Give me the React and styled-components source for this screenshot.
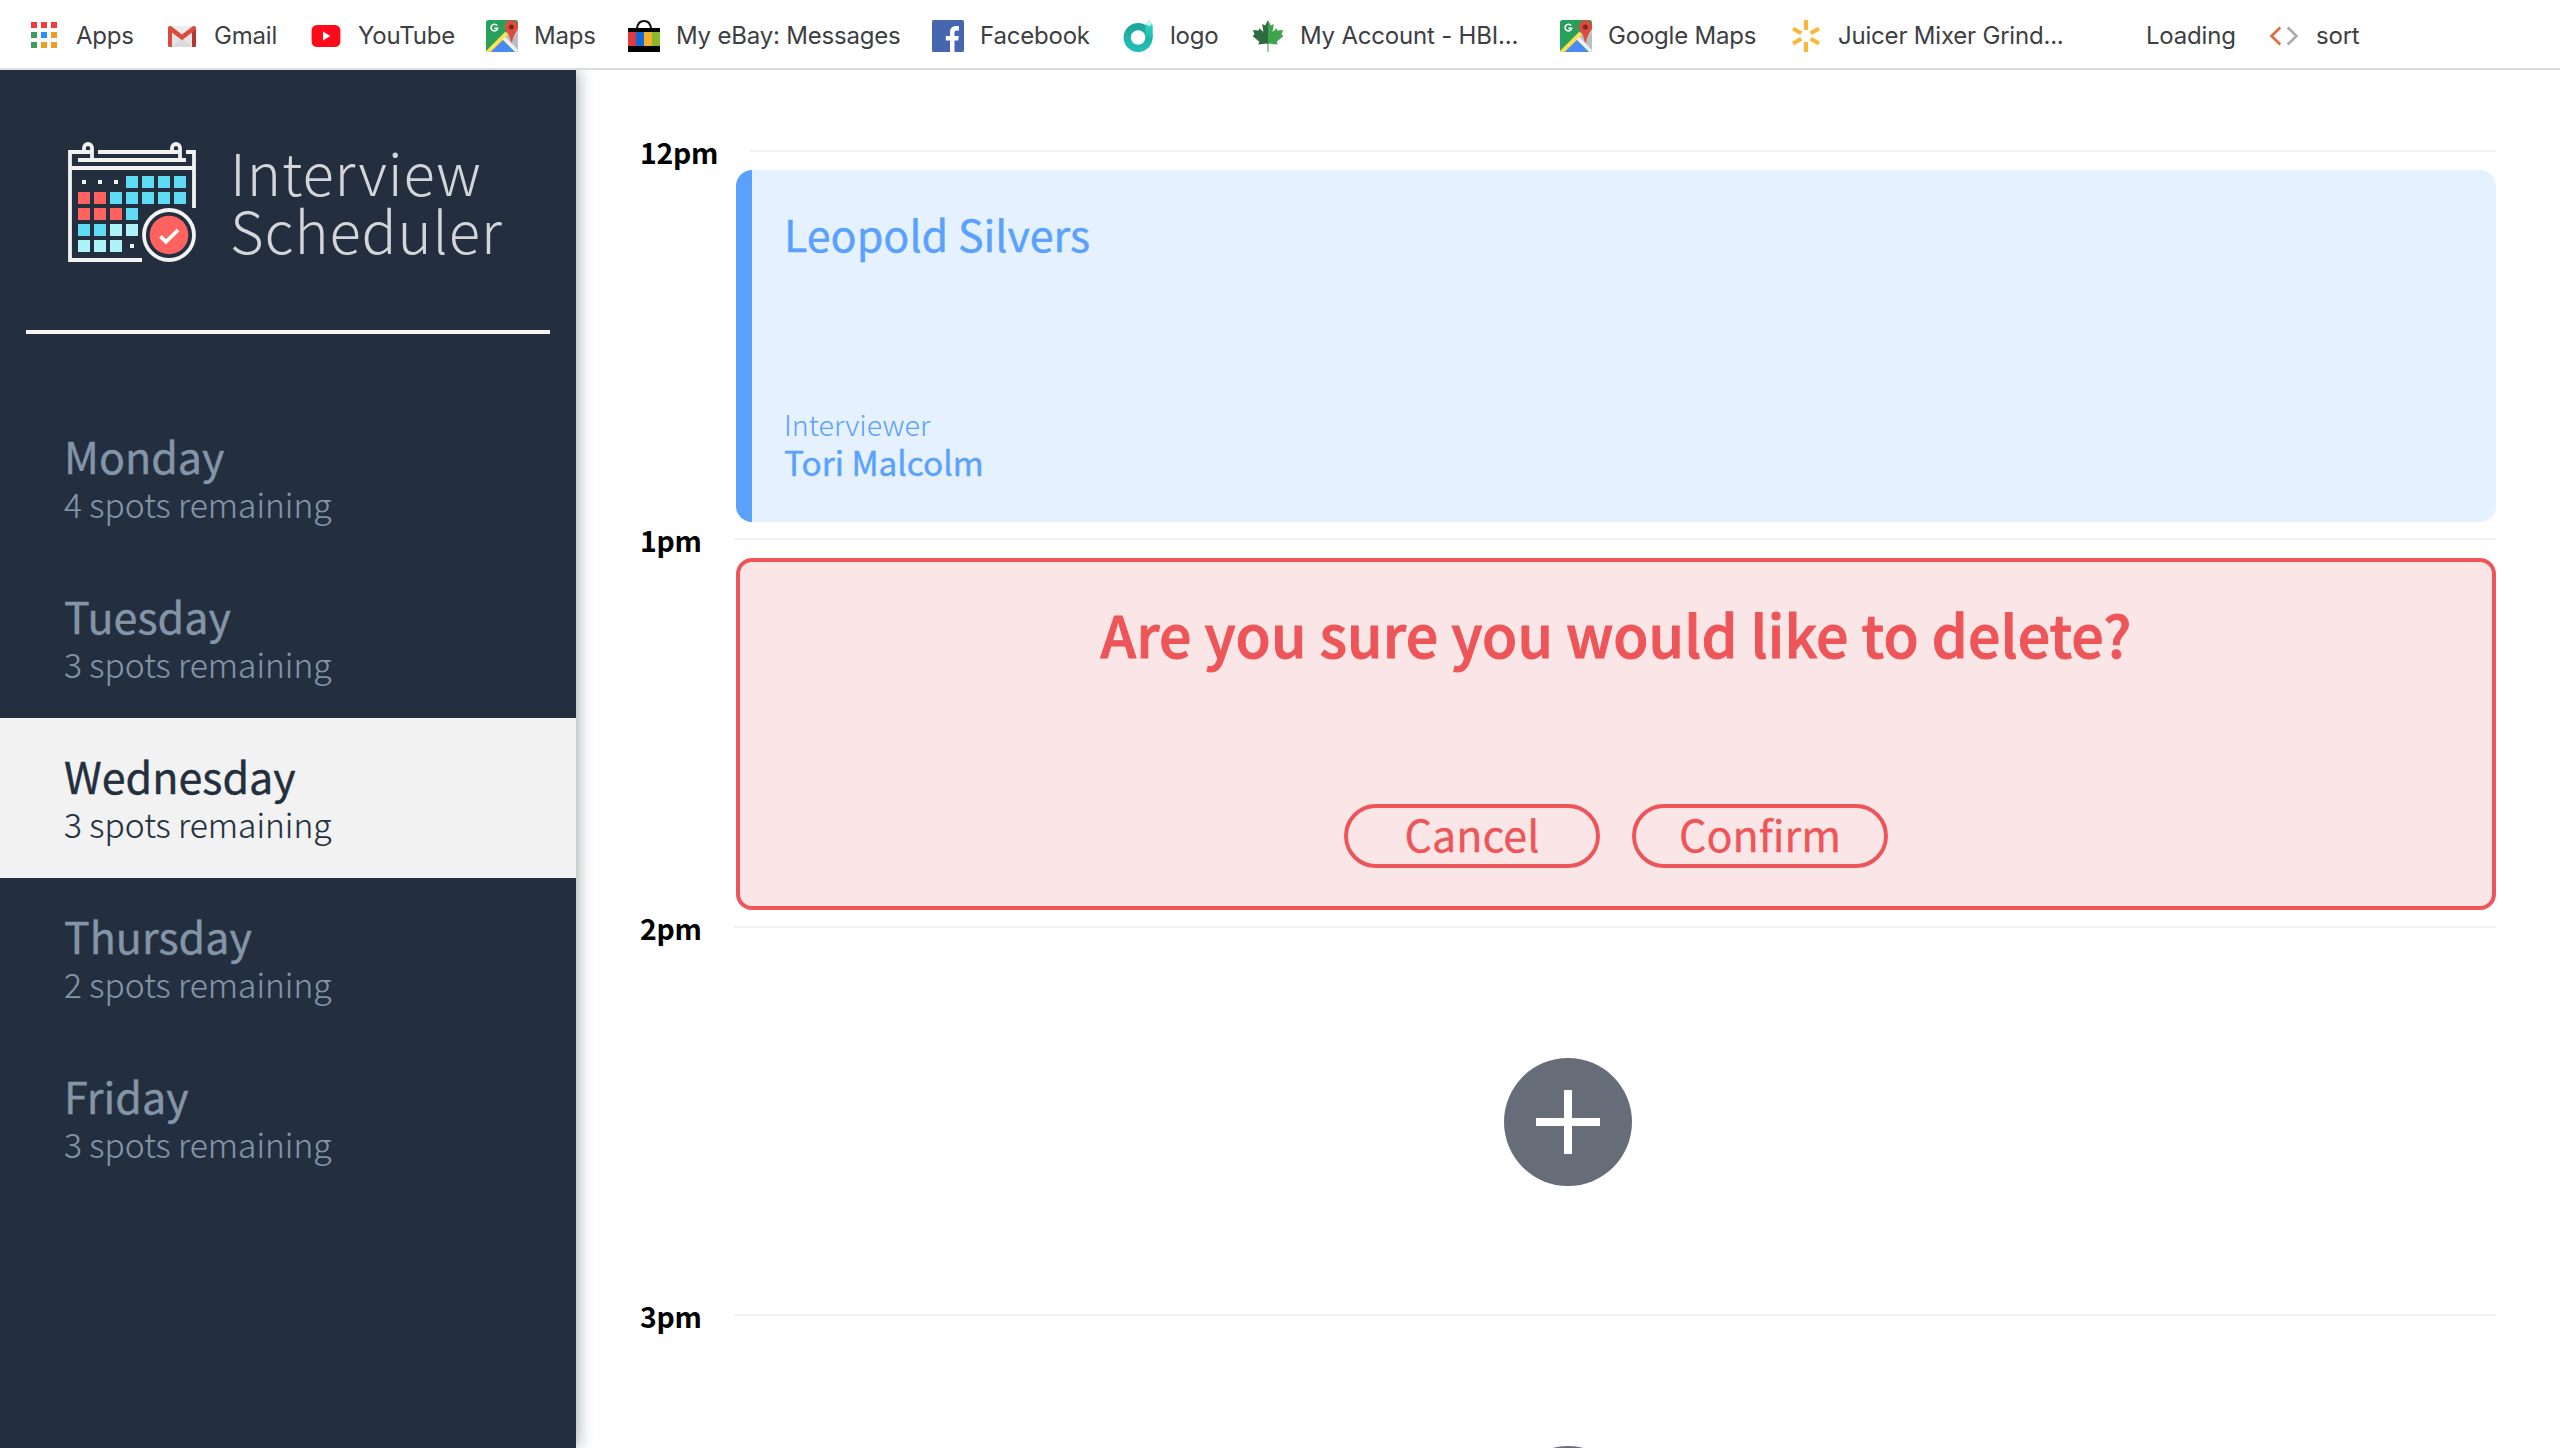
import React from 'react';
import styled, { createGlobalStyle } from 'styled-components';

const GlobalStyle = createGlobalStyle`
  *, *::before, *::after { box-sizing: border-box; }
  body {
    margin: 0;
    background: #ffffff;
    font-family: "Noto Sans CJK SC", "Open Sans", sans-serif;
    overflow: hidden;
  }
  h1, h2, h3, h4, p, ul { margin: 0; padding: 0; font-weight: 400; }
`;

const Page = styled.div`
  display: flex;
  flex-direction: column;
  width: 2560px;
  height: 1448px;
  overflow: hidden;
`;

/* ---------- bookmarks bar ---------- */

const BookmarksBar = styled.nav`
  display: flex;
  align-items: center;
  flex: none;
  height: 70px;
  padding: 4px 0 0 28px;
  background: #fff;
  border-bottom: 2px solid #dadce0;
`;

const Bookmark = styled.a`
  display: flex;
  align-items: center;
  gap: 16px;
  flex: none;
  width: ${(p) => p.$width}px;
  color: #3c4043;
  font: 400 24px/32px Inter, Roboto, sans-serif;
  letter-spacing: -0.2px;
  white-space: nowrap;
`;

const Favicon = styled.svg`
  display: block;
  flex: none;
  width: 32px;
  height: 32px;
`;

const AppsIcon = () => {
  const colors = ['#f33b3b', '#f33b3b', '#f33b3b', '#3f9c5a', '#2b8df7', '#eb9f25', '#3f9c5a', '#eb9f25', '#eb9f25'];
  return (
    <Favicon viewBox="0 0 32 32">
      {colors.map((c, i) => (
        <rect key={i} x={3 + (i % 3) * 10} y={2 + Math.floor(i / 3) * 10} width="6" height="6" fill={c} />
      ))}
    </Favicon>
  );
};

const GmailIcon = () => (
  <Favicon viewBox="0 0 32 32">
    <rect x="2" y="6" width="28" height="21" rx="1.500" fill="#ececec" />
    <path d="M6 27l10-9 10 9z" fill="#dcdcdc" />
    <path d="M5 27V12l11 9 11-9v15z" fill="#d6d6d6" opacity=".35" />
    <path d="M2 7.500v18A1.500 1.500 0 0 0 3.500 27H6V11.500z" fill="#d54b3f" />
    <path d="M30 7.500v18a1.500 1.500 0 0 1-1.500 1.500H26V11.500z" fill="#b6352c" />
    <path d="M2 8c0-2 2-2.600 3.200-1.700L16 14.500l10.800-8.200C28 5.400 30 6 30 8v1.500L16 20.300 2 9.500z" fill="#dc4b40" />
  </Favicon>
);

const YouTubeIcon = () => (
  <Favicon viewBox="0 0 32 32">
    <rect x="1.600" y="5" width="28.800" height="22" rx="5.500" fill="#ff0a1a" />
    <path d="M13 11.500v9l7.300-4.500z" fill="#fff" />
  </Favicon>
);

const MapsIcon = ({ id }) => (
  <Favicon viewBox="0 0 32 32">
    <clipPath id={id}>
      <rect width="32" height="32" rx="2.500" />
    </clipPath>
    <g clipPath={`url(#${id})`}>
      <rect width="32" height="32" fill="#28a05c" />
      <path d="M19 13L32 8v24z" fill="#c9cacd" />
      <path d="M32 14v18L19 17z" fill="#bdbec2" />
      <path d="M16.500 19.500L3 33h26z" fill="#4a8af4" />
      <path d="M19.500 11.500L-1 32h5.500L22 15z" fill="#ffdf4f" />
      <path d="M19 16.500l-2.500 3L29 32h5z" fill="#eff0f2" />
    </g>
    <path d="M25.500 0a6.800 6.800 0 0 0-6.800 6.800c0 4.700 5.300 7 6.100 15.500h1.300c.8-8.500 6-10.800 6-15.500A6.700 6.700 0 0 0 25.500 0z" fill="#dd4b3e" />
    <circle cx="25.300" cy="7" r="2.500" fill="#7d2620" />
    <path d="M11 5.600A3.300 3.300 0 1 0 11.600 8.300H8.300" fill="none" stroke="#fff" strokeWidth="1.600" />
  </Favicon>
);

const EbayIcon = () => (
  <Favicon viewBox="0 0 32 32">
    <path d="M9 8.500C9.500 4 12 1 16 1s6.500 3 7 7.500" fill="none" stroke="#111" strokeWidth="2" />
    <rect y="8" width="32" height="24" fill="#000" />
    <rect y="12" width="8" height="14" fill="#e43640" />
    <rect x="8" y="12" width="8" height="14" fill="#1268d6" />
    <rect x="16" y="12" width="8" height="14" fill="#f5ae2c" />
    <rect x="24" y="12" width="8" height="14" fill="#88b82c" />
  </Favicon>
);

const FacebookIcon = () => (
  <Favicon viewBox="0 0 32 32">
    <rect width="32" height="32" rx="1.600" fill="#4667b0" />
    <path d="M18 32V20.500h-4.200V16H18v-3.700C18 8.200 20.500 6 24.200 6c1.200 0 2.200.1 2.800.2v4.200h-2.200c-1.800 0-2.300.9-2.300 2.200V16h4.300l-.6 4.500h-3.700V32z" fill="#fff" />
  </Favicon>
);

const LogoIcon = () => (
  <Favicon viewBox="0 0 32 32">
    <defs>
      <linearGradient id="ring" x1="0" y1="0" x2="0" y2="1">
        <stop offset="0" stopColor="#1ba79b" />
        <stop offset="1" stopColor="#22bdb5" />
      </linearGradient>
      <linearGradient id="stem" x1="0" y1="0" x2="0" y2="1">
        <stop offset="0" stopColor="#37e0bd" />
        <stop offset="1" stopColor="#20b9b0" />
      </linearGradient>
    </defs>
    <circle cx="16.100" cy="17.500" r="10.900" fill="none" stroke="url(#ring)" strokeWidth="7.200" />
    <path d="M23.500 10.500V5.500L25 3.200 27 0l2.200 3.200 1.500 2.300v12.500h-7z" fill="url(#stem)" />
    <path d="M27 0l-2.200 4.200c.4 1.200 1.200 1.800 2.200 1.800s1.900-.6 2.300-1.800z" fill="#c9fbee" />
  </Favicon>
);

const LEAF_HALF =
  'M16 0l-2.800 5.500-3-1.500 1.200 8-4-3.800-.9 2.400L1 10l1.500 4.500L.5 16l6.800 5.800-1 2.700L15.200 23.500 15 32h1z';

const LeafIcon = () => (
  <Favicon viewBox="0 0 32 32">
    <path d={LEAF_HALF} fill="#2f6b40" />
    <path d={LEAF_HALF} transform="matrix(-1 0 0 1 32 0)" fill="#3fa54c" />
    <path d="M16 24v8" stroke="#9fcca5" strokeWidth="2" />
  </Favicon>
);

const SparkIcon = () => (
  <Favicon viewBox="0 0 32 32">
    <g stroke="#fcb737" strokeWidth="4.200" strokeLinecap="butt">
      {[0, 180].map((a) => (
        <path key={a} d="M16 0V10" transform={`rotate(${a} 16 16)`} />
      ))}
      {[60, 120, 240, 300].map((a) => (
        <path key={a} d="M16 1V10.500" transform={`rotate(${a} 16 16)`} />
      ))}
    </g>
  </Favicon>
);

const BlankIcon = () => <Favicon viewBox="0 0 32 32" />;

const CodeIcon = () => (
  <Favicon viewBox="0 0 32 32" fill="none" strokeWidth="2.600">
    <path d="M12.300 7.500L3.500 16l8.800 8.500" stroke="#e2673f" />
    <path d="M19.700 7.500l8.800 8.500-8.800 8.500" stroke="#adadad" />
  </Favicon>
);

const bookmarks = [
  { label: 'Apps', width: 138, icon: <AppsIcon /> },
  { label: 'Gmail', width: 144, icon: <GmailIcon /> },
  { label: 'YouTube', width: 176, icon: <YouTubeIcon /> },
  { label: 'Maps', width: 142, icon: <MapsIcon id="maps-a" /> },
  { label: 'My eBay: Messages', width: 304, icon: <EbayIcon /> },
  { label: 'Facebook', width: 190, icon: <FacebookIcon /> },
  { label: 'logo', width: 130, icon: <LogoIcon /> },
  { label: 'My Account - HBI...', width: 308, icon: <LeafIcon /> },
  { label: 'Google Maps', width: 230, icon: <MapsIcon id="maps-b" /> },
  { label: 'Juicer Mixer Grind...', width: 308, icon: <SparkIcon /> },
  { label: 'Loading', width: 170, icon: <BlankIcon /> },
  { label: 'sort', width: 120, icon: <CodeIcon /> },
];

/* ---------- sidebar ---------- */

const Body = styled.div`
  display: flex;
  flex: 1;
  min-height: 0;
`;

const Sidebar = styled.aside`
  flex: none;
  width: 576px;
  background: #232f3f;
  box-shadow: 0 0 16px rgba(34, 47, 62, 0.5);
  clip-path: inset(0 -40px 0 0);
`;

const Brand = styled.div`
  display: flex;
  gap: 32px;
  height: 260px;
  padding: 70px 0 0 66px;
`;

const BrandName = styled.h1`
  padding-top: 2px;
  color: #d3d5d8;
  font-size: 58px;
  font-weight: 300;
  line-height: 58px;
  letter-spacing: 0.9px;
`;

const BrandLine = styled.span`
  display: block;
`;

const CalendarSvg = styled.svg`
  flex: none;
  width: 132px;
  height: 124px;
`;

const CELLS = ['...cccc', 'rrccccc', 'rrrc', 'ccll', 'lll.'];
const CELL_COLORS = { c: '#5fdcf3', r: '#ff625f', l: '#aef2fa' };

const CalendarLogo = () => (
  <CalendarSvg viewBox="66 140 132 124">
    <g fill="none" stroke="#f2f2f2" strokeWidth="3.800">
      <path d="M142 260H70V152H92" />
      <path d="M84 152v-4a4 4 0 0 1 8 0v12" />
      <path d="M98 152H180" />
      <path d="M172 152v-4a4 4 0 0 1 8 0v12" />
      <path d="M186 152H194V208" />
      <path d="M78 160H186" />
      <path d="M70 168H194" />
    </g>
    {CELLS.map((row, r) =>
      row.split('').map((c, i) =>
        c === '.' ? (
          <rect key={`${r}${i}`} x={82 + i * 16} y={180 + r * 16} width="4" height="4" fill="#f2f2f2" />
        ) : (
          <rect key={`${r}${i}`} x={78 + i * 16} y={176 + r * 16} width="12" height="12" fill={CELL_COLORS[c]} />
        )
      )
    )}
    <circle cx="169" cy="235" r="25" fill="#232f3f" stroke="#f2f2f2" strokeWidth="3.800" />
    <circle cx="169" cy="235" r="19.300" fill="#ff625f" />
    <path d="M160.500 236.300l5.500 5.500L178 230" fill="none" stroke="#fff" strokeWidth="3.800" />
  </CalendarSvg>
);

const Divider = styled.hr`
  height: 4px;
  margin: 0 26px 64px;
  border: 0;
  background: #f8f4f2;
`;

const DayItem = styled.li`
  height: 160px;
  padding: 33px 0 0 64px;
  list-style: none;
  color: ${(p) => (p.$selected ? '#222f3e' : '#8395a7')};
  background: ${(p) => (p.$selected ? '#f2f2f2' : 'transparent')};
`;

const DayName = styled.h2`
  font-size: 43px;
  line-height: 48px;
  -webkit-text-stroke: 0.4px currentColor;
`;

const Spots = styled.h3`
  margin-top: 3px;
  font-size: 33.5px;
  font-weight: 300;
  line-height: 44px;
  -webkit-text-stroke: 0.2px currentColor;
`;

const days = [
  { name: 'Monday', spots: 4 },
  { name: 'Tuesday', spots: 3 },
  { name: 'Wednesday', spots: 3, selected: true },
  { name: 'Thursday', spots: 2 },
  { name: 'Friday', spots: 3 },
];

/* ---------- schedule ---------- */

const Schedule = styled.main`
  flex: 1;
  padding: 65px 64px 0;
  overflow: hidden;
`;

const Slot = styled.article`
  height: 388px;
`;

const SlotHeader = styled.header`
  display: flex;
  align-items: center;
  gap: 32px;
  height: 32px;
  margin-bottom: 3px;
`;

const Time = styled.h4`
  padding-top: 2px;
  color: #000;
  font-size: 28.4px;
  font-weight: 700;
  line-height: 32px;
  letter-spacing: -0.3px;
`;

const Rule = styled.div`
  flex: 1;
  height: 2px;
  background: #f2f2f2;
`;

const Appointment = styled.section`
  display: flex;
  flex-direction: column;
  justify-content: space-between;
  height: 352px;
  margin-left: 96px;
  padding: 38px 32px 40px;
  color: #59a1fd;
  background: #e5f1ff;
  border-left: 16px solid #59a1fb;
  border-radius: 16px;
`;

const Student = styled.h2`
  font-size: 43px;
  line-height: 50px;
  -webkit-text-stroke: 0.4px currentColor;
`;

const InterviewerLabel = styled.h4`
  font-size: 28.7px;
  font-weight: 300;
  line-height: 36px;
`;

const InterviewerName = styled.h3`
  font-size: 33.4px;
  line-height: 40px;
  -webkit-text-stroke: 0.4px currentColor;
`;

const ConfirmCard = styled.section`
  display: flex;
  flex-direction: column;
  align-items: center;
  justify-content: space-between;
  height: 352px;
  margin-left: 96px;
  padding: 40px 0 38px;
  color: #ed5558;
  background: #fbe6e7;
  border: 4px solid #ed5558;
  border-radius: 16px;
`;

const Question = styled.h1`
  font-size: 57.3px;
  font-weight: 500;
  line-height: 64px;
  letter-spacing: 0.1px;
  -webkit-text-stroke: 1px currentColor;
`;

const Actions = styled.div`
  display: flex;
  gap: 32px;
`;

const Button = styled.button`
  display: flex;
  align-items: center;
  justify-content: center;
  width: 256px;
  height: 64px;
  padding: 0 0 7px;
  color: inherit;
  background: transparent;
  border: 4px solid #ed5558;
  border-radius: 32px;
  font: 400 43px/48px "Noto Sans CJK SC", sans-serif;
  -webkit-text-stroke: 0.3px currentColor;
`;

const EmptySlot = styled.section`
  display: flex;
  align-items: center;
  justify-content: center;
  height: 352px;
`;

const AddSvg = styled.svg`
  display: block;
  width: 128px;
  height: 128px;
`;

const AddButton = () => (
  <EmptySlot>
    <AddSvg viewBox="0 0 128 128">
      <circle cx="64" cy="64" r="64" fill="#666d78" />
      <path d="M64 32V96M32 64H96" stroke="#fff" strokeWidth="8" />
    </AddSvg>
  </EmptySlot>
);

const TimeSlot = ({ time, children }) => (
  <Slot>
    <SlotHeader>
      <Time>{time}</Time>
      <Rule />
    </SlotHeader>
    {children}
  </Slot>
);

export default function App() {
  return (
    <Page>
      <GlobalStyle />
      <BookmarksBar>
        {bookmarks.map((b) => (
          <Bookmark key={b.label} $width={b.width}>
            {b.icon}
            <span>{b.label}</span>
          </Bookmark>
        ))}
      </BookmarksBar>
      <Body>
        <Sidebar>
          <Brand>
            <CalendarLogo />
            <BrandName>
              <BrandLine>Interview</BrandLine>
              <BrandLine>Scheduler</BrandLine>
            </BrandName>
          </Brand>
          <Divider />
          <ul>
            {days.map((d) => (
              <DayItem key={d.name} $selected={d.selected}>
                <DayName>{d.name}</DayName>
                <Spots>{d.spots} spots remaining</Spots>
              </DayItem>
            ))}
          </ul>
        </Sidebar>
        <Schedule>
          <TimeSlot time="12pm">
            <Appointment>
              <Student>Leopold Silvers</Student>
              <div>
                <InterviewerLabel>Interviewer</InterviewerLabel>
                <InterviewerName>Tori Malcolm</InterviewerName>
              </div>
            </Appointment>
          </TimeSlot>
          <TimeSlot time="1pm">
            <ConfirmCard>
              <Question>Are you sure you would like to delete?</Question>
              <Actions>
                <Button>Cancel</Button>
                <Button>Confirm</Button>
              </Actions>
            </ConfirmCard>
          </TimeSlot>
          <TimeSlot time="2pm">
            <AddButton />
          </TimeSlot>
          <TimeSlot time="3pm">
            <AddButton />
          </TimeSlot>
        </Schedule>
      </Body>
    </Page>
  );
}
